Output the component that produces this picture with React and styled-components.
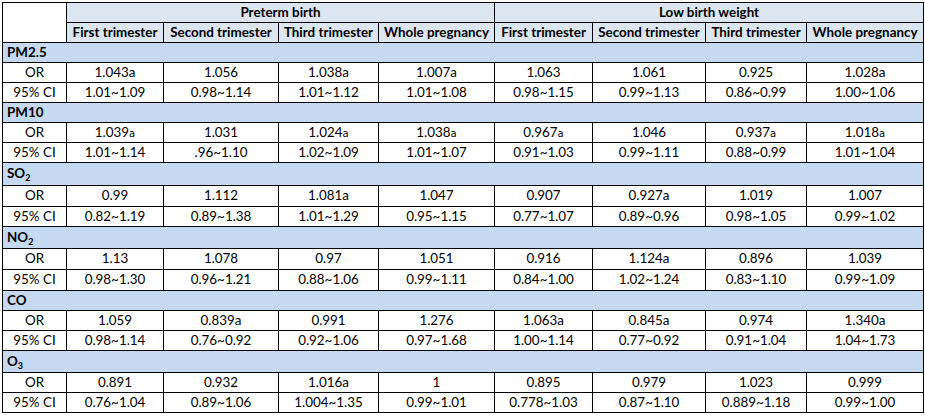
import React from "react";
import styled, { createGlobalStyle } from "styled-components";

const Global = createGlobalStyle`
  html, body { margin: 0; padding: 0; background: #ffffff; }
  body { font-family: "Lato", "Open Sans", "Noto Sans", sans-serif; color: #000; }
`;

const Page = styled.div`
  padding: 2px 0 0 2px;
`;

const Table = styled.table`
  border-collapse: collapse;
  table-layout: fixed;
  width: 921px;
  font-family: "Lato", "Noto Sans", sans-serif;
  font-size: 13.4px;
  line-height: 1;
`;

const Row = styled.tr`
  height: ${(p) => p.$h}px;
`;

const Cell = styled.td`
  border: 1px solid #000;
  padding: 0 2px;
  text-align: center;
  vertical-align: middle;
  white-space: nowrap;
  overflow: hidden;
`;

const Corner = styled(Cell)`
  background: #ffffff;
`;

const HeadCell = styled(Cell)`
  background: #dce6f1;
  font-weight: 700;
`;

const GroupCell = styled(Cell)`
  background: #c5d9f1;
  font-weight: 700;
  text-align: left;
  padding-left: 4px;
`;

const LabelCell = styled(Cell)``;

const ValueCell = styled(Cell)``;

const SmallA = styled.span`
  font-family: "DejaVu Sans", sans-serif;
  font-size: 10px;
`;

const Sub = styled.sub`
  font-size: 9px;
  vertical-align: -3px;
  line-height: 0;
`;

const widths = [64, 97, 115, 100, 116, 98, 113, 101, 117];
const periods = ["First trimester", "Second trimester", "Third trimester", "Whole pregnancy"];

const groups = [
  {
    name: "PM2.5",
    h: [20, 20, 20],
    or: ["1.043a", "1.056", "1.038a", "1.007a", "1.063", "1.061", "0.925", "1.028a"],
    ci: ["1.01~1.09", "0.98~1.14", "1.01~1.12", "1.01~1.08", "0.98~1.15", "0.99~1.13", "0.86~0.99", "1.00~1.06"],
  },
  {
    name: "PM10",
    h: [20, 20, 20],
    small: true,
    or: ["1.039a", "1.031", "1.024a", "1.038a", "0.967a", "1.046", "0.937a", "1.018a"],
    ci: ["1.01~1.14", ".96~1.10", "1.02~1.09", "1.01~1.07", "0.91~1.03", "0.99~1.11", "0.88~0.99", "1.01~1.04"],
  },
  {
    name: "SO",
    sub: "2",
    h: [23, 21, 20],
    or: ["0.99", "1.112", "1.081a", "1.047", "0.907", "0.927a", "1.019", "1.007"],
    ci: ["0.82~1.19", "0.89~1.38", "1.01~1.29", "0.95~1.15", "0.77~1.07", "0.89~0.96", "0.98~1.05", "0.99~1.02"],
  },
  {
    name: "NO",
    sub: "2",
    h: [22, 21, 21],
    or: ["1.13", "1.078", "0.97", "1.051", "0.916", "1.124a", "0.896", "1.039"],
    ci: ["0.98~1.30", "0.96~1.21", "0.88~1.06", "0.99~1.11", "0.84~1.00", "1.02~1.24", "0.83~1.10", "0.99~1.09"],
  },
  {
    name: "CO",
    h: [20, 20, 20],
    or: ["1.059", "0.839a", "0.991", "1.276", "1.063a", "0.845a", "0.974", "1.340a"],
    ci: ["0.98~1.14", "0.76~0.92", "0.92~1.06", "0.97~1.68", "1.00~1.14", "0.77~0.92", "0.91~1.04", "1.04~1.73"],
  },
  {
    name: "O",
    sub: "3",
    h: [22, 20, 20],
    or: ["0.891", "0.932", "1.016a", "1", "0.895", "0.979", "1.023", "0.999"],
    ci: ["0.76~1.04", "0.89~1.06", "1.004~1.35", "0.99~1.01", "0.778~1.03", "0.87~1.10", "0.889~1.18", "0.99~1.00"],
  },
];

function Value({ text, small }) {
  if (small && text.endsWith("a")) {
    return (
      <>
        {text.slice(0, -1)}
        <SmallA>a</SmallA>
      </>
    );
  }
  return <>{text}</>;
}

export default function App() {
  return (
    <Page>
      <Global />
      <Table>
        <colgroup>
          {widths.map((w, i) => (
            <col key={i} style={{ width: w }} />
          ))}
        </colgroup>
        <tbody>
          <Row $h={20}>
            <Corner rowSpan={2} />
            <HeadCell colSpan={4}>Preterm birth</HeadCell>
            <HeadCell colSpan={4}>Low birth weight</HeadCell>
          </Row>
          <Row $h={20}>
            {[...periods, ...periods].map((p, i) => (
              <HeadCell key={i}>{p}</HeadCell>
            ))}
          </Row>
          {groups.map((g) => (
            <React.Fragment key={g.name + (g.sub || "")}>
              <Row $h={g.h[0]}>
                <GroupCell colSpan={9}>
                  {g.name}
                  {g.sub && <Sub>{g.sub}</Sub>}
                </GroupCell>
              </Row>
              <Row $h={g.h[1]}>
                <LabelCell>OR</LabelCell>
                {g.or.map((v, i) => (
                  <ValueCell key={i}>
                    <Value text={v} small={g.small} />
                  </ValueCell>
                ))}
              </Row>
              <Row $h={g.h[2]}>
                <LabelCell>95% CI</LabelCell>
                {g.ci.map((v, i) => (
                  <ValueCell key={i}>{v}</ValueCell>
                ))}
              </Row>
            </React.Fragment>
          ))}
        </tbody>
      </Table>
    </Page>
  );
}
